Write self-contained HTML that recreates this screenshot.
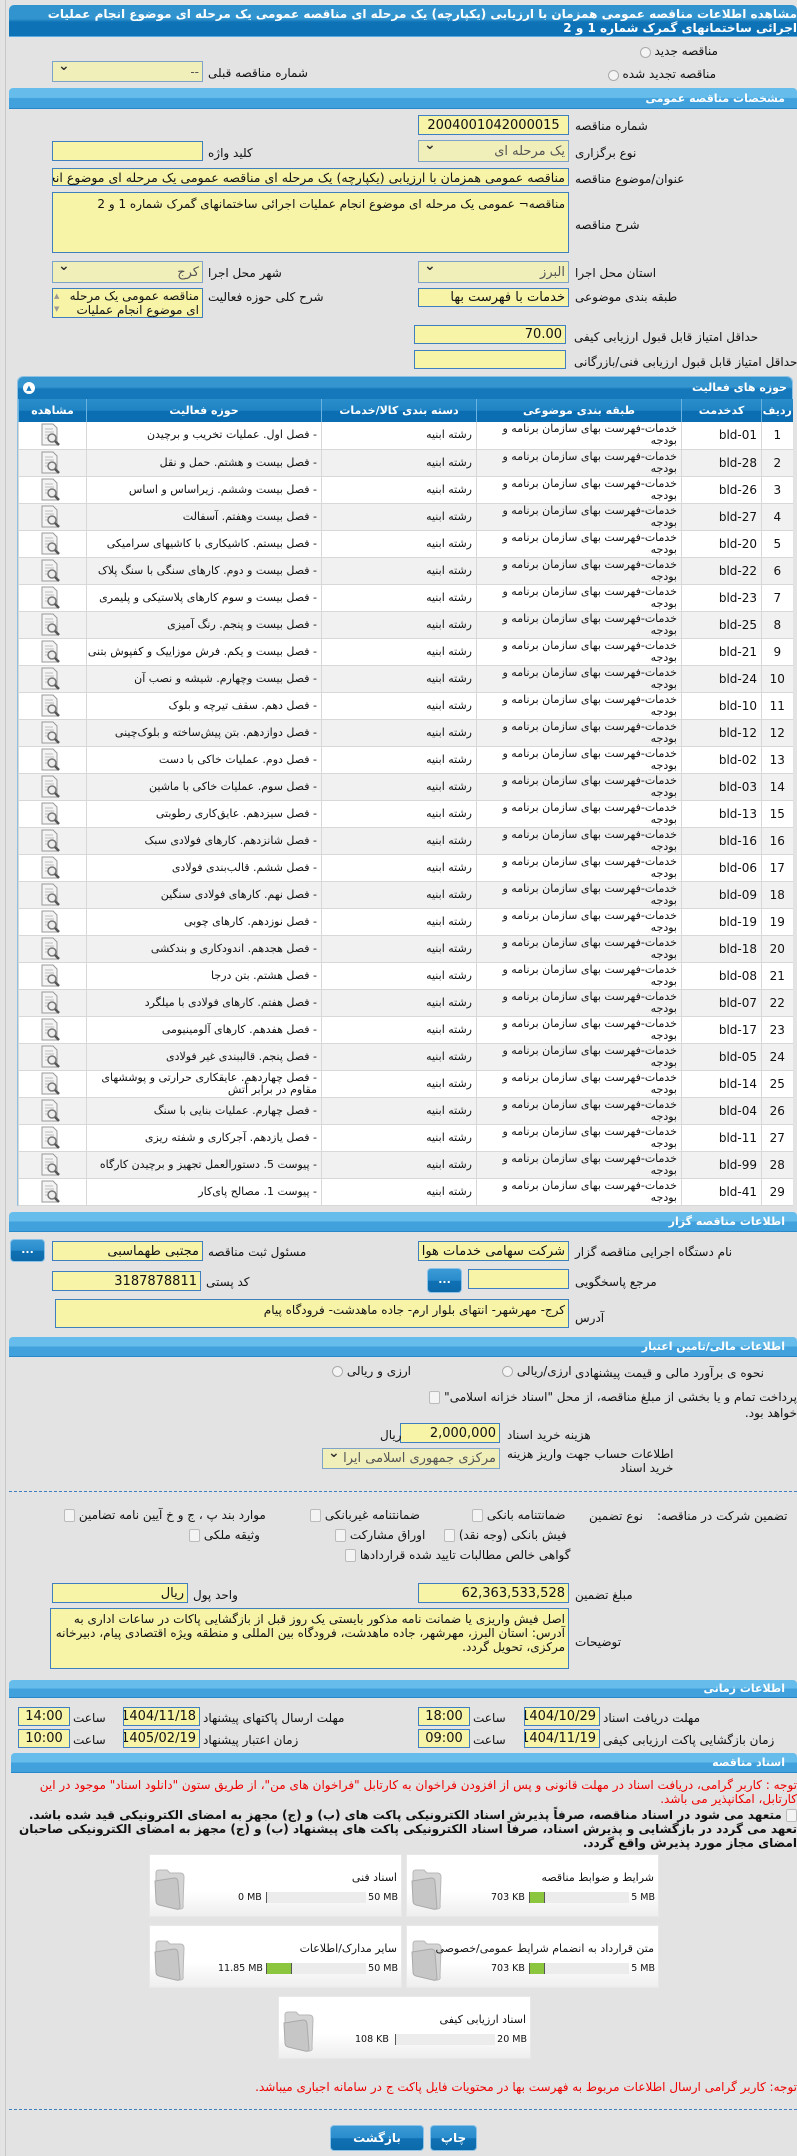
<!DOCTYPE html>
<html><head><meta charset="utf-8">
<style>
*{box-sizing:border-box;margin:0;padding:0}
body{width:797px;height:2156px;background:#e3e3e3;font-family:"DejaVu Sans","Liberation Sans",sans-serif;font-size:11px;color:#111;position:relative;overflow:hidden}
.a{position:absolute;white-space:nowrap}
.l{position:absolute;white-space:nowrap;direction:rtl}
.f{position:absolute;background:#f7f4a7;border:1px solid #3f7fbf;direction:rtl;padding:0 3px;font-size:12px;white-space:nowrap;overflow:hidden;display:flex;align-items:center}
.s{background:#f1efb9;border-color:#7fa3c6;color:#555}
.s:after{content:"⌄";position:absolute;left:5px;top:-4px;color:#333;font-size:14px;font-weight:bold}
.h{position:absolute;left:9px;right:0;background:linear-gradient(#66bdeb 0,#66bdeb 48%,#40a1dd 52%,#40a1dd 100%);border-bottom:1px solid #2a88c8;border-radius:4px 4px 0 0;color:#fff;font-weight:bold;direction:rtl;padding-right:12px;font-size:11px}
.btn{position:absolute;background:linear-gradient(#3a9ad6 0,#2a8ccc 50%,#0f71b4 52%,#0d6aaa 100%);border:1px solid #8cc2e8;border-radius:4px;color:#fff;text-align:center;font-weight:bold}
table{border-collapse:collapse;position:absolute;left:18px;top:399px;width:774px;direction:rtl;table-layout:fixed}
th{background:linear-gradient(#2a8dcb 0,#1f84c4 50%,#0c6eb2 52%,#0c6eb2 100%);color:#fff;height:23px;font-size:11px;border-left:1px solid #6ab2e0}
td{height:27px;border-left:1px solid #d8d8d8;border-bottom:1px solid #d8d8d8;padding:0;vertical-align:top}
td>div{height:26px;overflow:hidden;padding:0 4px;line-height:12px;display:flex;align-items:center}
td.t>div{align-items:flex-start;padding-top:1px}
tr:nth-child(even) td{background:#f1f1f1}
tr:nth-child(odd) td{background:#fff}
.chk{display:inline-block;width:11px;height:13px;border:1px solid #bbb;background:#f4f4f4;border-radius:2px;vertical-align:middle}
.rad{display:inline-block;width:11px;height:11px;border:1px solid #aaa;border-radius:50%;background:#f4f4f4;vertical-align:middle}
.box{position:absolute;width:253px;height:63px;background:linear-gradient(#fff 60%,#eee);border:1px solid #e8e8e8;direction:rtl}
.box .tt{position:absolute;right:4px;top:16px;font-size:11px}
.box .bar{position:absolute;left:116px;top:37px;width:100px;height:11px;background:#ececec;border-left:1px solid #555}
.box .g{position:absolute;left:0;top:0;height:11px;background:#8cc63f;border-right:1px solid #555}
.box .mx{position:absolute;right:3px;top:37px;font-size:9.5px;direction:ltr;white-space:nowrap}
.box .mn{position:absolute;top:37px;font-size:9.5px;direction:ltr;white-space:nowrap;text-align:right}
.red{color:#e00}
</style></head><body>
<div class="a" style="left:5px;top:0;width:1px;height:2156px;background:#c8c8c8"></div>

<div class="a" style="left:9px;top:5px;width:788px;height:32px;background:linear-gradient(#3194cf 0,#3194cf 45%,#0d72b6 55%,#0d72b6 100%);border-radius:5px 5px 0 0;border-bottom:1px solid #5aa9e0"></div>
<div class="l" style="right:0;top:7px;width:760px;color:#fff;font-weight:bold;font-size:12px;line-height:14px;white-space:normal;text-align:right">مشاهده اطلاعات مناقصه عمومی همزمان با ارزیابی (یکپارچه) یک مرحله ای مناقصه عمومی یک مرحله ای موضوع انجام عملیات اجرائی ساختمانهای گمرک شماره 1 و 2</div>

<div class="l" style="left:640px;top:44px"><span style="font-size:12px">مناقصه جدید</span> <span class="rad"></span></div>
<div class="l" style="left:608px;top:67px"><span style="font-size:12px">مناقصه تجدید شده</span> <span class="rad"></span></div>
<div class="f s" style="left:52px;top:61px;width:151px;height:21px">--</div>
<div class="l" style="left:208px;top:66px;font-size:12px">شماره مناقصه قبلی</div>

<div class="h" style="top:88px;height:21px;line-height:21px">مشخصات مناقصه عمومی</div>

<div class="f" style="left:418px;top:115px;width:151px;height:20px;justify-content:center;direction:ltr;font-size:13px">2004001042000015</div>
<div class="l" style="left:575px;top:119px;font-size:12px">شماره مناقصه</div>
<div class="f s" style="left:418px;top:140px;width:151px;height:22px;font-size:13px">یک مرحله ای</div>
<div class="l" style="left:575px;top:146px;font-size:12px">نوع برگزاری</div>
<div class="f" style="left:52px;top:141px;width:151px;height:20px"></div>
<div class="l" style="left:208px;top:146px;font-size:12px">کلید واژه</div>
<div class="f" style="left:52px;top:168px;width:517px;height:18px;font-size:12.5px;justify-content:flex-start">مناقصه عمومی همزمان با ارزیابی (یکپارچه) یک مرحله ای مناقصه عمومی یک مرحله ای  موضوع انجام</div>
<div class="l" style="left:575px;top:172px;font-size:12px">عنوان/موضوع مناقصه</div>
<div class="f" style="left:52px;top:192px;width:517px;height:61px;align-items:flex-start;padding-top:4px;font-size:12px">مناقصه¬ عمومی یک مرحله ای  موضوع  انجام عملیات اجرائی ساختمانهای گمرک شماره 1 و 2</div>
<div class="l" style="left:575px;top:218px;font-size:12px">شرح مناقصه</div>

<div class="f s" style="left:418px;top:261px;width:151px;height:22px;font-size:13px">البرز</div>
<div class="l" style="left:575px;top:266px;font-size:12px">استان محل اجرا</div>
<div class="f s" style="left:52px;top:261px;width:151px;height:22px;font-size:13px">کرج</div>
<div class="l" style="left:208px;top:266px;font-size:12px">شهر محل اجرا</div>
<div class="f" style="left:418px;top:288px;width:151px;height:19px;font-size:13px">خدمات با فهرست بها</div>
<div class="l" style="left:575px;top:290px;font-size:12px">طبقه بندی موضوعی</div>
<div class="f" style="left:52px;top:288px;width:151px;height:30px;align-items:flex-start;white-space:normal;line-height:14px;font-size:12px;padding-left:16px">مناقصه عمومی یک مرحله ای  موضوع  انجام عملیات</div>
<div class="a" style="left:54px;top:290px;width:10px;height:26px;color:#999;font-size:7px;line-height:13px">▲<br>▼</div>
<div class="l" style="left:208px;top:290px;font-size:12px">شرح کلی حوزه فعالیت</div>

<div class="f" style="left:414px;top:325px;width:152px;height:19px;font-size:13px">70.00</div>
<div class="l" style="left:574px;top:330px;font-size:12px">حداقل امتیاز قابل قبول ارزیابی کیفی</div>
<div class="f" style="left:414px;top:350px;width:152px;height:19px"></div>
<div class="l" style="left:574px;top:355px;font-size:12px">حداقل امتیاز قابل قبول ارزیابی فنی/بازرگانی</div>

<div class="a" style="left:17px;top:376px;width:776px;height:830px;border:1px solid #8fc1e3;border-radius:6px 6px 0 0;background:#fff"></div>
<div class="a" style="left:18px;top:377px;width:774px;height:22px;background:linear-gradient(#3495cf 0,#3495cf 45%,#1478bb 55%,#1478bb 100%);border-radius:5px 5px 0 0"></div>
<div class="l" style="right:10px;top:381px;color:#fff;font-weight:bold">حوزه های فعالیت</div>
<div class="a" style="left:23px;top:382px;width:12px;height:12px;border-radius:50%;background:#fff;color:#1478bb;font-size:7px;text-align:center;line-height:12px">▲</div>

<table>
<colgroup><col style="width:31px"><col style="width:80px"><col style="width:205px"><col style="width:155px"><col style="width:235px"><col style="width:68px"></colgroup>
<tr><th>ردیف</th><th>کدخدمت</th><th>طبقه بندی موضوعی</th><th>دسته بندی کالا/خدمات</th><th>حوزه فعالیت</th><th>مشاهده</th></tr>
</table>
<table id="tb" style="top:422px"></table>

<div class="h" style="top:1212px;height:20px;line-height:20px">اطلاعات مناقصه گزار</div>
<div class="f" style="left:418px;top:1241px;width:151px;height:20px;font-size:13px">شرکت سهامی خدمات هوا</div>
<div class="l" style="left:575px;top:1245px;font-size:12px">نام دستگاه اجرایی مناقصه گزار</div>
<div class="f" style="left:52px;top:1241px;width:151px;height:20px;font-size:13px">مجتبی طهماسبی</div>
<div class="l" style="left:208px;top:1245px;font-size:12px">مسئول ثبت مناقصه</div>
<div class="btn" style="left:10px;top:1239px;width:35px;height:23px;line-height:20px">...</div>
<div class="f" style="left:468px;top:1269px;width:101px;height:20px"></div>
<div class="l" style="left:575px;top:1275px;font-size:12px">مرجع پاسخگویی</div>
<div class="btn" style="left:427px;top:1268px;width:35px;height:25px;line-height:22px">...</div>
<div class="f" style="left:52px;top:1271px;width:149px;height:20px;font-size:13px">3187878811</div>
<div class="l" style="left:206px;top:1275px;font-size:12px">کد پستی</div>
<div class="f" style="left:55px;top:1299px;width:514px;height:29px;align-items:flex-start;padding-top:3px;font-size:12px">کرج- مهرشهر- انتهای بلوار ارم- جاده ماهدشت- فرودگاه پیام</div>
<div class="l" style="left:575px;top:1311px;font-size:12px">آدرس</div>

<div class="h" style="top:1337px;height:20px;line-height:20px">اطلاعات مالی/تامین اعتبار</div>
<div class="l" style="left:575px;top:1366px;font-size:12px">نحوه ی برآورد مالی و قیمت پیشنهادی</div>
<div class="l" style="left:502px;top:1364px;font-size:12px">ارزی/ریالی <span class="rad"></span></div>
<div class="l" style="left:332px;top:1364px;font-size:12px">ارزی و ریالی <span class="rad"></span></div>
<div class="l" style="right:0;top:1390px;font-size:12px">پرداخت تمام و یا بخشی از مبلغ مناقصه، از محل "اسناد خزانه اسلامی" <span class="chk"></span></div>
<div class="l" style="right:0;top:1406px;font-size:12px">خواهد بود.</div>
<div class="f" style="left:400px;top:1423px;width:100px;height:20px;font-size:13px">2,000,000</div>
<div class="l" style="left:380px;top:1428px;font-size:12px">ریال</div>
<div class="l" style="left:507px;top:1428px;font-size:12px">هزینه خرید اسناد</div>
<div class="f s" style="left:322px;top:1448px;width:178px;height:21px;font-size:13px;padding-left:16px">مرکزی جمهوری اسلامی ایرا</div>
<div class="l" style="left:507px;top:1447px;font-size:12px;line-height:14px">اطلاعات حساب جهت واریز هزینه<br>خرید اسناد</div>
<div class="a" style="left:9px;top:1491px;width:788px;border-top:1px dashed #3f7fbf"></div>

<div class="l" style="left:657px;top:1509px;font-size:12px">تضمین شرکت در مناقصه:</div>
<div class="l" style="left:589px;top:1509px;font-size:12px">نوع تضمین</div>
<div class="l" style="left:472px;top:1508px;font-size:12px">ضمانتنامه بانکی <span class="chk"></span></div>
<div class="l" style="left:310px;top:1508px;font-size:12px">ضمانتنامه غیربانکی <span class="chk"></span></div>
<div class="l" style="left:64px;top:1508px;font-size:12px">موارد بند پ ، ج و خ آیین نامه تضامین <span class="chk"></span></div>
<div class="l" style="left:444px;top:1528px;font-size:12px">فیش بانکی (وجه نقد) <span class="chk"></span></div>
<div class="l" style="left:335px;top:1528px;font-size:12px">اوراق مشارکت <span class="chk"></span></div>
<div class="l" style="left:189px;top:1528px;font-size:12px">وثیقه ملکی <span class="chk"></span></div>
<div class="l" style="left:345px;top:1548px;font-size:12px">گواهی خالص مطالبات تایید شده قراردادها <span class="chk"></span></div>

<div class="f" style="left:418px;top:1583px;width:151px;height:20px;font-size:13px">62,363,533,528</div>
<div class="l" style="left:575px;top:1588px;font-size:12px">مبلغ تضمین</div>
<div class="f" style="left:52px;top:1583px;width:136px;height:20px;font-size:13px">ریال</div>
<div class="l" style="left:193px;top:1588px;font-size:12px">واحد پول</div>
<div class="f" style="left:50px;top:1608px;width:519px;height:61px;align-items:flex-start;white-space:normal;line-height:14px;padding-top:3px;font-size:12px">اصل فیش واریزی یا ضمانت نامه مذکور بایستی یک روز قبل از بازگشایی پاکات در ساعات اداری به آدرس: استان البرز، مهرشهر، جاده ماهدشت، فرودگاه بین المللی و منطقه ویژه اقتصادی پیام، دبیرخانه مرکزی، تحویل گردد.</div>
<div class="l" style="left:575px;top:1635px;font-size:12px">توضیحات</div>

<div class="h" style="top:1680px;height:18px;line-height:18px">اطلاعات زمانی</div>
<div class="f" style="left:524px;top:1707px;width:76px;height:19px;font-size:13px">1404/10/29</div>
<div class="l" style="left:603px;top:1711px;font-size:12px">مهلت دریافت اسناد</div>
<div class="f" style="left:418px;top:1707px;width:52px;height:19px;font-size:13px;justify-content:center">18:00</div>
<div class="l" style="left:473px;top:1711px;font-size:12px">ساعت</div>
<div class="f" style="left:123px;top:1707px;width:77px;height:19px;font-size:13px">1404/11/18</div>
<div class="l" style="left:203px;top:1711px;font-size:12px">مهلت ارسال پاکتهای پیشنهاد</div>
<div class="f" style="left:18px;top:1707px;width:52px;height:19px;font-size:13px;justify-content:center">14:00</div>
<div class="l" style="left:73px;top:1711px;font-size:12px">ساعت</div>
<div class="f" style="left:524px;top:1729px;width:76px;height:19px;font-size:13px">1404/11/19</div>
<div class="l" style="left:603px;top:1733px;font-size:12px">زمان بازگشایی پاکت ارزیابی کیفی</div>
<div class="f" style="left:418px;top:1729px;width:52px;height:19px;font-size:13px;justify-content:center">09:00</div>
<div class="l" style="left:473px;top:1733px;font-size:12px">ساعت</div>
<div class="f" style="left:123px;top:1729px;width:77px;height:19px;font-size:13px">1405/02/19</div>
<div class="l" style="left:203px;top:1733px;font-size:12px">زمان اعتبار پیشنهاد</div>
<div class="f" style="left:18px;top:1729px;width:52px;height:19px;font-size:13px;justify-content:center">10:00</div>
<div class="l" style="left:73px;top:1733px;font-size:12px">ساعت</div>

<div class="h" style="top:1753px;left:11px;height:20px;line-height:20px">اسناد مناقصه</div>
<div class="l red" style="right:0;top:1778px;width:790px;white-space:normal;text-align:right;font-size:12px;line-height:14px">توجه : کاربر گرامی، دریافت اسناد در مهلت قانونی و پس از افزودن فراخوان به کارتابل "فراخوان های من"، از طریق ستون "دانلود اسناد" موجود در این کارتابل، امکانپذیر می باشد.</div>
<div class="l" style="right:0;top:1808px;width:790px;white-space:normal;text-align:right;font-size:12px;line-height:14px;font-weight:bold"><span class="chk"></span> متعهد می شود در اسناد مناقصه، صرفاً پذیرش اسناد الکترونیکی پاکت های (ب) و (ج) مجهز به امضای الکترونیکی قید شده باشد. تعهد می گردد در بازگشایی و پذیرش اسناد، صرفاً اسناد الکترونیکی پاکت های پیشنهاد (ب) و (ج) مجهز به امضای الکترونیکی صاحبان امضای مجاز مورد پذیرش واقع گردد.</div>

<svg width="0" height="0" style="position:absolute"><defs><g id="fd"><path d="M2 8 L2 30 Q2 34 6 35 L26 40 Q30 40 29 36 L30 8 Q30 4 26 4 L16 4 L13 1 L5 1 Q2 1 2 4Z" fill="#d4d4d4" stroke="#b8b8b8"/><path d="M1 12 L20 9 Q24 9 24 13 L26 38 Q26 41 22 40 L5 36 Q2 35 2 32Z" fill="#c6c6c6" stroke="#aaa"/></g></defs></svg>

<div class="box" style="left:406px;top:1854px"><svg class="a" style="left:4px;top:14px" width="32" height="42"><use href="#fd"/></svg><div class="tt">شرایط و ضوابط مناقصه</div><div class="mx">5 MB</div><div class="bar" style="left:122px;width:100px"><div class="g" style="width:15px"></div></div><div class="mn" style="left:84px">703 KB</div></div>
<div class="box" style="left:149px;top:1854px"><svg class="a" style="left:4px;top:14px" width="32" height="42"><use href="#fd"/></svg><div class="tt">اسناد فنی</div><div class="mx">50 MB</div><div class="bar" style="left:116px;width:100px"></div><div class="mn" style="left:88px">0 MB</div></div>
<div class="box" style="left:406px;top:1925px"><svg class="a" style="left:4px;top:14px" width="32" height="42"><use href="#fd"/></svg><div class="tt">متن قرارداد به انضمام شرایط عمومی/خصوصی</div><div class="mx">5 MB</div><div class="bar" style="left:122px;width:100px"><div class="g" style="width:15px"></div></div><div class="mn" style="left:84px">703 KB</div></div>
<div class="box" style="left:149px;top:1925px"><svg class="a" style="left:4px;top:14px" width="32" height="42"><use href="#fd"/></svg><div class="tt">سایر مدارک/اطلاعات</div><div class="mx">50 MB</div><div class="bar" style="left:116px;width:100px"><div class="g" style="width:25px"></div></div><div class="mn" style="left:68px">11.85 MB</div></div>
<div class="box" style="left:278px;top:1996px"><svg class="a" style="left:4px;top:14px" width="32" height="42"><use href="#fd"/></svg><div class="tt">اسناد ارزیابی کیفی</div><div class="mx">20 MB</div><div class="bar" style="left:116px;width:100px"></div><div class="mn" style="left:76px">108 KB</div></div>

<div class="l red" style="right:0;top:2080px;font-size:12px">توجه: کاربر گرامی ارسال اطلاعات مربوط به فهرست بها در محتویات فایل پاکت ج در سامانه اجباری میباشد.</div>
<div class="a" style="left:9px;top:2109px;width:788px;border-top:1px dashed #3f7fbf"></div>
<div class="btn" style="left:330px;top:2125px;width:94px;height:26px;line-height:24px;font-size:12px">بازگشت</div>
<div class="btn" style="left:430px;top:2125px;width:47px;height:26px;line-height:24px;font-size:12px">چاپ</div>

<script>
var d=[["bld-01","فصل اول. عملیات تخریب و برچیدن"],["bld-28","فصل بیست و هشتم. حمل و نقل"],["bld-26","فصل بیست وششم. زیراساس و اساس"],["bld-27","فصل بیست وهفتم. آسفالت"],["bld-20","فصل بیستم. کاشیکاری با کاشیهای سرامیکی"],["bld-22","فصل بیست و دوم. کارهای سنگی با سنگ پلاک"],["bld-23","فصل بیست و سوم کارهای پلاستیکی و پلیمری"],["bld-25","فصل بیست و پنجم. رنگ آمیزی"],["bld-21","فصل بیست و یکم. فرش موزاییک و کفپوش بتنی"],["bld-24","فصل بیست وچهارم. شیشه و نصب آن"],["bld-10","فصل دهم. سقف تیرچه و بلوک"],["bld-12","فصل دوازدهم. بتن پیش‌ساخته و بلوک‌چینی"],["bld-02","فصل دوم. عملیات خاکی با دست"],["bld-03","فصل سوم. عملیات خاکی با ماشین"],["bld-13","فصل سیزدهم. عایق‌کاری رطوبتی"],["bld-16","فصل شانزدهم. کارهای فولادی سبک"],["bld-06","فصل ششم. قالب‌بندی فولادی"],["bld-09","فصل نهم. کارهای فولادی سنگین"],["bld-19","فصل نوزدهم. کارهای چوبی"],["bld-18","فصل هجدهم. اندودکاری و بندکشی"],["bld-08","فصل هشتم. بتن درجا"],["bld-07","فصل هفتم. کارهای فولادی با میلگرد"],["bld-17","فصل هفدهم. کارهای آلومینیومی"],["bld-05","فصل پنجم. قالببندی غیر فولادی"],["bld-14","فصل چهاردهم. عایقکاری حرارتی و پوششهای مقاوم در برابر آتش"],["bld-04","فصل چهارم. عملیات بنایی با سنگ"],["bld-11","فصل یازدهم. آجرکاری و شفته ریزی"],["bld-99","پیوست 5. دستورالعمل تجهیز و برچیدن کارگاه"],["bld-41","پیوست 1. مصالح پای‌کار"]];
var ic='<svg width="22" height="24" viewBox="0 0 22 24"><path d="M3 1h11l4 4v17H3z" fill="#f4f4f4" stroke="#999"/><path d="M6 6h8M6 9h9M6 12h6M6 15h5" stroke="#bbb"/><circle cx="13" cy="15" r="4" fill="#eee" stroke="#777" stroke-width="1.5"/><path d="M16 18l4 4" stroke="#555" stroke-width="2.5"/></svg>';
var h='<colgroup><col style="width:31px"><col style="width:80px"><col style="width:205px"><col style="width:155px"><col style="width:235px"><col style="width:68px"></colgroup>';
for(var i=0;i<d.length;i++){h+='<tr><td><div style="justify-content:center;font-size:12px">'+(i+1)+'</div></td><td><div style="direction:ltr;justify-content:flex-end;font-size:12px">'+d[i][0]+'</div></td><td class="t"><div style="white-space:normal">خدمات-فهرست بهای سازمان برنامه و بودجه</div></td><td><div>رشته ابنیه</div></td><td><div style="white-space:'+(i==24?'normal':'nowrap')+'">- '+d[i][1]+'</div></td><td><div style="padding:0 0 0 20px;direction:ltr">'+ic+'</div></td></tr>';}
document.getElementById('tb').innerHTML=h;
</script>
</body></html>
